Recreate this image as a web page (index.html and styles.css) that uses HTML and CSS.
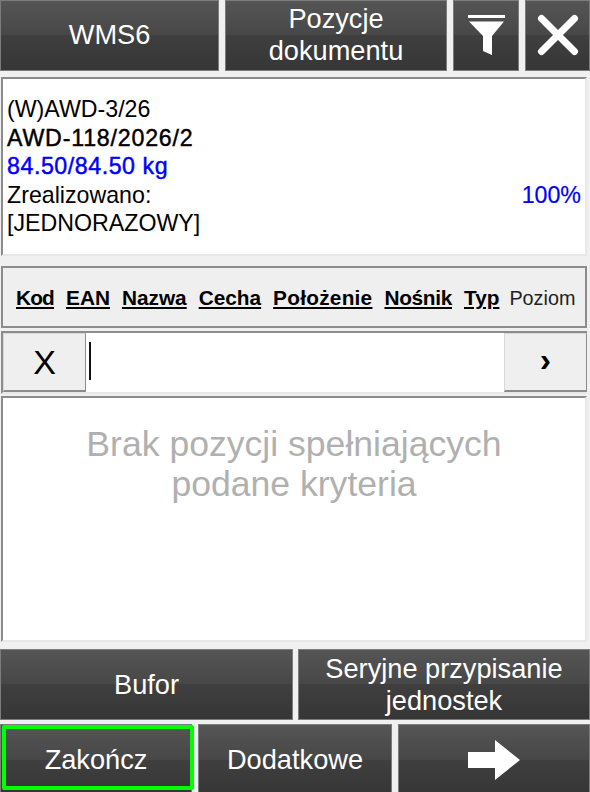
FILE: index.html
```html
<!DOCTYPE html>
<html lang="pl">
<head>
<meta charset="utf-8">
<title>Pozycje dokumentu</title>
<link rel="stylesheet" href="styles.css">
</head>
<body>
<div class="screen">
  <header class="bar top">
    <div class="btn">WMS6</div>
    <div class="btn">Pozycje<br>dokumentu</div>
    <div class="btn"><svg width="37" height="40" viewBox="0 0 37 40"><path d="M0 0H37V3H0zM1 6.500H36L24 21V40L15 36V21z" fill="#fff"/></svg></div>
    <div class="btn"><svg width="44" height="44" viewBox="0 0 44 44"><path d="M5.500 5.500L38.500 38.500M38.500 5.500L5.500 38.500" stroke="#fff" stroke-width="7" stroke-linecap="round"/></svg></div>
  </header>
  <section class="panel info">
    <div>(W)AWD-3/26</div>
    <div class="strong">AWD-118/2026/2</div>
    <div class="strong blue weight">84.50/84.50 kg</div>
    <div class="split"><span>Zrealizowano:</span><span class="blue strong-pct">100%</span></div>
    <div>[JEDNORAZOWY]</div>
  </section>
  <nav class="panel filters">
    <a class="kod">Kod</a><a>EAN</a><a>Nazwa</a><a>Cecha</a><a class="wide">Położenie</a><a class="narrow">Nośnik</a><a>Typ</a><span>Poziom</span>
  </nav>
  <div class="panel search">
    <div class="sbtn clear">X</div>
    <div class="input"><i class="caret"></i></div>
    <div class="sbtn next">›</div>
  </div>
  <main class="panel list">Brak pozycji spełniających<br>podane kryteria</main>
  <div class="bar row1">
    <div class="btn">Bufor</div>
    <div class="btn">Seryjne przypisanie<br>jednostek</div>
  </div>
  <footer class="bar row2">
    <div class="btn active">Zakończ</div>
    <div class="btn">Dodatkowe</div>
    <div class="btn"><svg width="52" height="40" viewBox="0 0 52 40"><path d="M0 12H27V0L52 20L27 40V28H0z" fill="#fff"/></svg></div>
  </footer>
</div>
</body>
</html>
```
FILE: styles.css
```css
*, *::after { box-sizing: border-box; }
html, body { margin: 0; padding: 0; }
body { background: #f0f0f0; font-family: "Liberation Sans", Arial, sans-serif; color: #000; }
.screen { width: 590px; height: 792px; overflow: hidden; display: flex; flex-direction: column; }
.bar { display: grid; flex: none; }
.top { grid-template-columns: 219px 222px 66px 65px; column-gap: 6px; height: 71px; margin-bottom: 6px; }
.top .btn { padding-bottom: 2px; }
.row1 { grid-template-columns: 293px 292px; column-gap: 5px; height: 71px; margin-bottom: 4px; }
.row2 { grid-template-columns: 192px 194px 192px; column-gap: 6px; height: 72px; }
.btn {
  display: flex; align-items: center; justify-content: center; text-align: center;
  background: linear-gradient(#555 0%, #474747 50%, #3f3f3f 50%, #363636 100%);
  border: 1px solid #7c7c7c; color: #fff; font-size: 27.2px; line-height: 32px;
}
.active { position: relative; }
.active::after {
  content: ""; position: absolute; top: 0; left: 1px; width: 192px; height: 65px;
  border: 4px solid #0f0; border-radius: 2px;
}
.panel { flex: none; margin: 0 3px 0 1px; border: 2px solid; border-color: #8c8c8c #e8e8e8 #e8e8e8 #8c8c8c; }
.info {
  height: 179px; background: #fff; padding: 16px 4px 0 4px;
  font-size: 23.200px; line-height: 28.6px;
}
.strong { letter-spacing: 0.8px; -webkit-text-stroke: 0.45px currentColor; }
.weight { letter-spacing: 0.55px; }
.strong-pct { -webkit-text-stroke: 0.2px currentColor; }
.blue { color: #00f; }
.split { display: flex; justify-content: space-between; }
.filters {
  height: 62px; margin-top: 10px; background: #efefef;
  border-color: #8c8c8c;
  display: flex; align-items: center; padding: 2px 0 0 13px; gap: 12px;
  font-size: 20.8px;
}
.filters a { font-weight: bold; text-decoration: underline; }
.filters .kod { letter-spacing: -0.8px; }
.filters .wide { letter-spacing: 0.25px; }
.filters .narrow { letter-spacing: -0.3px; }
.filters span { color: #222; font-size: 19.8px; margin-left: -2px; }
.search { height: 63px; margin-top: 3px; display: flex; background: #fff; border-right: 0; }
.sbtn {
  flex: none; width: 83px; display: flex; align-items: center; justify-content: center;
  background: #efefef; border: 1px solid #d8d8d8; border-right-color: #8c8c8c; border-bottom: 2px solid #8c8c8c;
}
.clear { font-size: 34px; }
.next { font-size: 34px; font-weight: bold; padding-bottom: 6px; }
.input { flex: 1; padding: 9px 0 0 3px; }
.caret { display: block; width: 2px; height: 38px; background: #111; }
.list {
  height: 246px; margin-top: 2px; margin-bottom: 7px; background: #fff;
  padding-top: 26px; text-align: center; color: #b0b0b0; font-size: 35.6px; line-height: 40px;
}
```
